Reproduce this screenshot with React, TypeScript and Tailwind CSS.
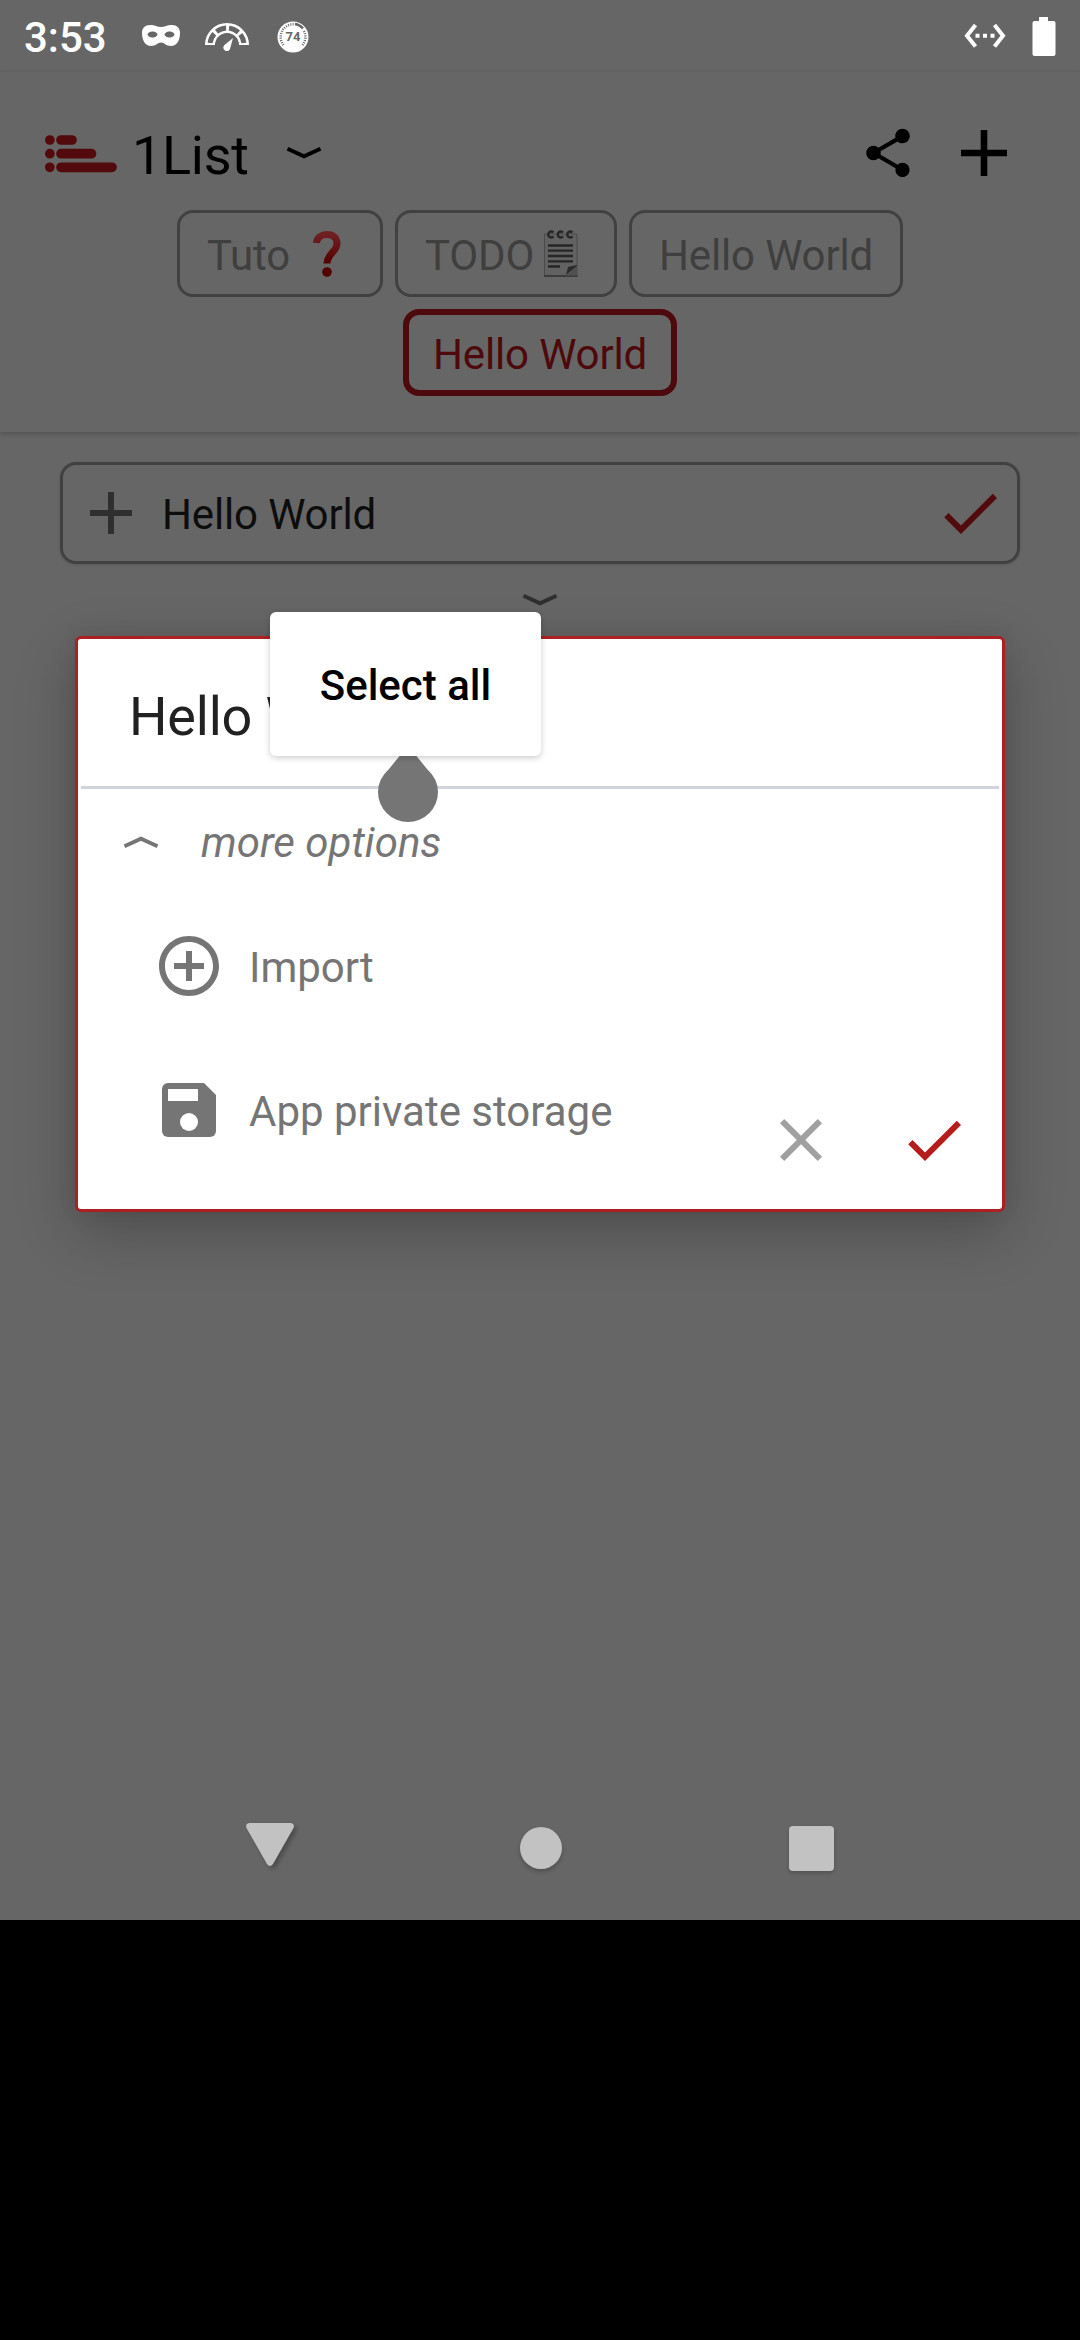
const GREY = "#757575";

function Chevron({ className, up = false }: { className: string; up?: boolean }) {
  return (
    <svg viewBox="0 0 36 12" className={className} fill="none" stroke="currentColor" strokeWidth="3.8">
      <path d={up ? "M1.500 10.200L18 2.700L34.500 10.200" : "M1.500 1.800L18 9.300L34.500 1.800"} />
    </svg>
  );
}

function Check({ className }: { className: string }) {
  return (
    <svg viewBox="0 0 24 24" className={className} fill="currentColor">
      <path d="M9 16.17L4.83 12l-1.42 1.41L9 19 21 7l-1.41-1.41z" />
    </svg>
  );
}

function StatusBar() {
  return (
    <div className="flex h-[72px] items-center pl-6 text-white">
      <span className="mt-[3px] w-[118px] text-[42px] font-medium leading-none">3:53</span>
      <svg viewBox="0 0 38 24" className="h-6 w-[38px]">
        <path fill="#fff" fillRule="evenodd" d="M8 1C12 0.5 15 3 19 3S26 .5 30 1C35 1 38 4 38 9C38 16 35 22 29 22C24 22 22 18.500 19 18.500S14 22 9 22C3 22 0 16 0 9C0 4 3 1 8 1ZM10.500 7.500C7.500 7.500 5.500 9 5.500 10.500S8 13.500 10.500 13.500S15.500 12 15.500 10.500S13 7.500 10.500 7.500ZM27.500 7.500C25 7.500 22.500 9 22.500 10.500S25 13.500 27.500 13.500S32.500 12 32.500 10.500S30 7.500 27.500 7.500Z" />
      </svg>
      <svg viewBox="0 0 44 28" className="ml-[25px] mt-[2px] h-7 w-11" fill="none">
        <path stroke="#fff" strokeWidth="10" d="M5 22A17 17 0 0 1 39 22" />
        <path stroke="#666" strokeWidth="5" strokeDasharray="10.300 3" d="M5.120 20A17 17 0 0 1 38.880 20" />
        <path fill="#fff" d="M28 15L25.300 25A3.500 3.500 0 1 1 19.500 22Z" />
      </svg>
      <svg viewBox="0 0 32 32" className="ml-[28px] mt-[2px] h-8 w-8">
        <circle cx="16" cy="16" r="15.500" fill="#fff" />
        <path d="M6.500 24A12.700 12.700 0 0 1 17 3.300M27 10A12.700 12.700 0 0 1 25.500 24" fill="none" stroke="#666" strokeWidth="2.500" strokeDasharray="1 1.300" />
        <path d="M18 3A13 13 0 0 1 26 7.500" fill="none" stroke="#666" strokeWidth="2.500" />
        <text x="16" y="20.300" textAnchor="middle" fontSize="13" fontWeight="700" fill="#666">74</text>
      </svg>
      <svg viewBox="0 0 42 26" className="ml-auto h-[26px] w-[42px]" fill="none" stroke="#fff" strokeWidth="4">
        <path d="M11.500 2L3 12.700L11.500 23.500M30.500 2L39 12.700L30.500 23.500" />
        <path d="M11.500 12.700H32" strokeDasharray="4 3.500" />
      </svg>
      <svg viewBox="0 0 24 39" className="ml-[26px] mr-6 h-[39px] w-6 fill-white">
        <path d="M7 0H16V4H21.500Q23.500 4 23.500 6V37Q23.500 39 21.500 39H2.500Q.5 39 .5 37V6Q.5 4 2.500 4H7Z" />
      </svg>
    </div>
  );
}

function QuestionEmoji() {
  return (
    <svg viewBox="0 0 28 48" className="ml-[23px] h-12 w-7">
      <defs>
        <linearGradient id="question" x1="0" y1="0" x2="0" y2="1">
          <stop offset="0" stopColor="#6f2022" />
          <stop offset="1" stopColor="#560000" />
        </linearGradient>
      </defs>
      <path d="M3.500 13C3.800 7.500 8.500 4.500 14 4.500C20 4.500 24 7.700 24 13.500C24 22 14.300 23 14 33.500" fill="none" stroke="url(#question)" strokeWidth="7" />
      <circle cx="14" cy="42" r="4.800" fill="#560000" />
    </svg>
  );
}

function NotepadEmoji() {
  return (
    <svg viewBox="0 0 36 48" className="ml-[9px] h-12 w-9">
      <path d="M1.500 4H34V46.500H1.500Z" fill="#626262" stroke="#4b4b4b" />
      <path d="M1 46H34.500" stroke="#3c3c3c" strokeWidth="2" />
      <g fill="none" stroke="#262626" strokeWidth="2.300">
        <path d="M5 15.500H30M5 20.700H30M5 26H30M5 31.300H30M5 36.500H17" />
        <path d="M10.500 6.500A3 3 0 1 1 10.500 2.500M20 6.500A3 3 0 1 1 20 2.500M29.500 6.500A3 3 0 1 1 29.500 2.500" />
      </g>
      <path d="M23 45L25 37L34 35V36Z" fill="#2b2b2b" />
      <path d="M23 45.500L34 36V45.500Z" fill="#505050" />
    </svg>
  );
}

function Tab({ label, className, children }: { label: string; className: string; children?: React.ReactNode }) {
  return (
    <div className={"flex h-[87px] items-center whitespace-pre rounded-[16px] border-solid " + className}>
      <span className="mt-[4px] leading-[48px] tracking-[-0.15px]">{label}</span>
      {children}
    </div>
  );
}

function Header() {
  return (
    <header className="h-[360px] shadow-[0_2px_5px_rgba(0,0,0,0.2)]">
      <div className="flex h-[138px] items-center pl-[45px] pt-[24px]">
        <svg viewBox="0 0 72 38" className="mt-[2px] h-[38px] w-[72px]" stroke="#520a0c" strokeWidth="9.700" strokeLinecap="round">
          <path d="M4.850 5h.01M4.850 18.700h.01M4.850 32.300h.01M16 5H27M16 18.700H46.500M16 32.300H67" />
        </svg>
        <h1 className="ml-[15px] mt-[5px] w-[138px] text-[54px] leading-none tracking-[-0.3px] text-black">1List</h1>
        <Chevron className="ml-4 h-3 w-9 text-black" />
        <svg viewBox="0 0 24 24" className="ml-auto h-[58px] w-[58px]">
          <path d="M18 16.080c-.76 0-1.440.3-1.960.77L8.910 12.700c.05-.23.09-.46.09-.7s-.04-.47-.09-.7l7.050-4.110c.54.5 1.250.81 2.040.81 1.660 0 3-1.340 3-3s-1.340-3-3-3-3 1.340-3 3c0 .24.04.47.09.7L8.040 9.810C7.500 9.310 6.790 9 6 9c-1.660 0-3 1.340-3 3s1.340 3 3 3c.79 0 1.500-.31 2.040-.81l7.120 4.160c-.05.21-.08.43-.08.65 0 1.610 1.310 2.920 2.920 2.920s2.920-1.310 2.920-2.920-1.310-2.920-2.920-2.920z" />
        </svg>
        <svg viewBox="0 0 46 46" className="ml-[44px] mr-[73px] h-[46px] w-[46px]" stroke="#000" strokeWidth="6.600">
          <path d="M23 0V46M0 23H46" />
        </svg>
      </div>
      <div className="flex flex-col items-center gap-3 text-[42px]">
        <div className="flex gap-3 text-[#3f3f3f]">
          <Tab label="Tuto" className="w-[206px] border-[3px] border-[#414141] pl-[27px]">
            <QuestionEmoji />
          </Tab>
          <Tab label="TODO" className="w-[222px] border-[3px] border-[#414141] pl-[27px]">
            <NotepadEmoji />
          </Tab>
          <Tab label="Hello World" className="w-[274px] border-[3px] border-[#414141] pl-[27px]" />
        </div>
        <Tab label="Hello World" className="w-[274px] border-[6px] border-[#4d090c] pl-[24px] text-[#4d090c]" />
      </div>
    </header>
  );
}

function Dialog() {
  return (
    <section className="absolute left-[75px] top-[636px] h-[576px] w-[930px] rounded-[6px] border-[3px] border-[#ac2023] bg-white px-[3px] shadow-[0_20px_60px_rgba(0,0,0,0.24),0_0_20px_rgba(0,0,0,0.08)]">
      <div className="flex h-[150px] items-center border-b-[3px] border-[#d1d5db] pl-[48px] text-[54px] text-[#212121]">
        <span className="mt-[8px] leading-none tracking-[-0.2px]">Hello World</span>
      </div>
      <div className="flex h-[105px] items-center pl-[42px] text-[42px] italic text-[#757575]">
        <Chevron up className="h-3 w-9" />
        <span className="ml-[42px] mt-[3px] leading-[48px]">more options</span>
      </div>
      <div className="flex h-[144px] items-center pl-[72px] text-[42px] text-[#757575]">
        <svg viewBox="0 0 24 24" className="h-[72px] w-[72px]" fill={GREY}>
          <path d="M13 7h-2v4H7v2h4v4h2v-4h4v-2h-4V7zm-1-5C6.480 2 2 6.480 2 12s4.480 10 10 10 10-4.480 10-10S17.520 2 12 2zm0 18c-4.410 0-8-3.590-8-8s3.590-8 8-8 8 3.590 8 8-3.590 8-8 8z" />
        </svg>
        <span className="ml-6 mt-[3px]">Import</span>
      </div>
      <div className="flex h-[144px] items-center pl-[72px] text-[42px] text-[#757575]">
        <svg viewBox="0 0 24 24" className="h-[72px] w-[72px]">
          <path fill={GREY} d="M5 3H17L21 7V19A2 2 0 0 1 19 21H5A2 2 0 0 1 3 19V5A2 2 0 0 1 5 3Z" />
          <path fill="#fff" d="M5 5H15V9H5Z" />
          <circle fill="#fff" cx="12" cy="16" r="3" />
        </svg>
        <span className="ml-6 mt-[3px] w-[516px]">App private storage</span>
        <svg viewBox="0 0 24 24" className="mt-[60px] h-[72px] w-[72px]" fill="#a0a0a0">
          <path d="M19 6.410L17.590 5 12 10.590 6.410 5 5 6.410 10.590 12 5 17.590 6.410 19 12 13.410 17.590 19 19 17.590 13.410 12z" />
        </svg>
        <Check className="ml-[61px] mt-[60px] h-[72px] w-[72px] text-[#b71c1c]" />
      </div>
    </section>
  );
}

function SelectionPopup() {
  return (
    <>
      <svg viewBox="0 0 60 74" className="absolute left-[378px] top-[748px] h-[74px] w-[60px]" fill={GREY}>
        <path d="M24 5Q30 1 36 5L49 21Q60 31 60 44A30 30 0 0 1 0 44Q0 31 11 21Z" />
      </svg>
      <div className="absolute left-[270px] top-[612px] flex h-[144px] w-[271px] items-center justify-center rounded-[6px] bg-white pt-[3px] text-[42px] font-medium text-black shadow-[0_2px_6px_rgba(0,0,0,0.2)]">
        Select all
      </div>
    </>
  );
}

function NavBar() {
  return (
    <nav className="mt-auto flex h-[144px] items-center justify-between px-[246px]">
      <svg viewBox="0 0 48 44" className="mb-[6px] h-11 w-12 drop-shadow-[3px_3px_2px_rgba(0,0,0,0.25)]" fill="#c2c2c2">
        <path d="M3 0H45Q49 1 47.500 5L27 41Q24 45 21 41L.5 5Q-1 1 3 0Z" />
      </svg>
      <div className="ml-[-2px] h-[42px] w-[42px] rounded-full bg-[#c2c2c2] shadow-[0_3px_4px_rgba(0,0,0,0.2)]" />
      <div className="h-[45px] w-[45px] rounded-[4px] bg-[#c2c2c2] shadow-[0_2px_4px_rgba(0,0,0,0.2)]" />
    </nav>
  );
}

export default function App() {
  return (
    <div className="h-[2340px] w-[1080px] bg-black font-[Roboto,sans-serif]">
      <main className="relative flex h-[1920px] flex-col bg-[#666]">
        <StatusBar />
        <Header />
        <div className="mx-[60px] mt-[30px] flex h-[102px] items-center rounded-[16px] border-[3px] border-[#414141] pl-[27px] pr-[11px] text-[42px] text-[#0d0d0d] shadow-[0_1px_3px_rgba(0,0,0,0.15)]">
          <svg viewBox="0 0 42 42" className="h-[42px] w-[42px]" stroke="#2f2f2f" strokeWidth="6">
            <path d="M21 0V42M0 21H42" />
          </svg>
          <span className="ml-[30px] mt-[3px] leading-[48px] tracking-[-0.15px]">Hello World</span>
          <Check className="ml-auto h-[72px] w-[72px] text-[#520a0c]" />
        </div>
        <Chevron className="mt-[30px] h-3 w-9 self-center text-[#2f2f2f]" />
        <NavBar />
        <Dialog />
        <SelectionPopup />
      </main>
    </div>
  );
}
